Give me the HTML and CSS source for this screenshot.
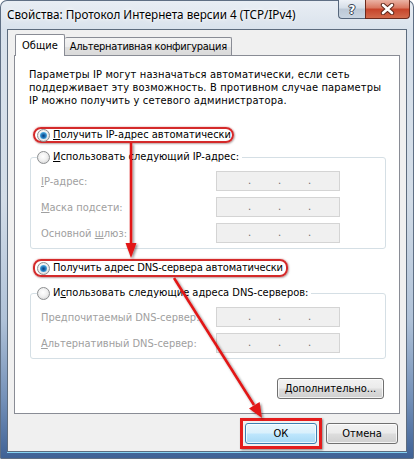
FILE: index.html
```html
<!DOCTYPE html>
<html lang="ru">
<head>
  <meta charset="UTF-8" />
  <title>Свойства: Протокол Интернета версии 4 (TCP/IPv4)</title>
  <link rel="stylesheet" href="styles.css">
</head>
<body>

  <div class="window">
    <div class="titlebar">
      <span class="title">Свойства: Протокол Интернета версии 4 (TCP/IPv4)</span>
      <div class="caption-btns">
        <span class="cap-btn help">?</span>
        <span class="cap-btn close">
          <svg width="15" height="12" viewBox="0 0 15 12">
            <path d="M3 2 L12 10 M12 2 L3 10" stroke="#5a2418" stroke-width="4.4" stroke-linecap="round"/>
            <path d="M3 2 L12 10 M12 2 L3 10" stroke="#fff" stroke-width="2.6" stroke-linecap="round"/>
          </svg>
        </span>
      </div>
    </div>

    <div class="client">
      <div class="tabs">
        <span class="tab active">Общие</span>
        <span class="tab">Альтернативная конфигурация</span>
      </div>

      <div class="panel">
        <p class="intro">Параметры IP могут назначаться автоматически, если сеть<br>поддерживает эту возможность. В противном случае параметры<br>IP можно получить у сетевого администратора.</p>

        <div class="option mark mark-ip">
          <span class="radio checked"></span>
          <span><u>П</u>олучить IP-адрес автоматически</span>
        </div>

        <fieldset class="group group-ip">
          <legend class="option">
            <span class="radio"></span>
            <span><u>И</u>спользовать следующий IP-адрес:</span>
          </legend>
          <div class="field">
            <span class="label"><u>I</u>P-адрес:</span>
            <span class="ip"><i>.</i><i>.</i><i>.</i></span>
          </div>
          <div class="field">
            <span class="label"><u>М</u>аска подсети:</span>
            <span class="ip"><i>.</i><i>.</i><i>.</i></span>
          </div>
          <div class="field">
            <span class="label">Основной <u>ш</u>люз:</span>
            <span class="ip"><i>.</i><i>.</i><i>.</i></span>
          </div>
        </fieldset>

        <div class="option mark mark-dns">
          <span class="radio checked"></span>
          <span>Получить адрес DNS-сервера автоматически</span>
        </div>

        <fieldset class="group group-dns">
          <legend class="option">
            <span class="radio"></span>
            <span>И<u>с</u>пользовать следующие адреса DNS-серверов:</span>
          </legend>
          <div class="field">
            <span class="label">Пре<u>д</u>почитаемый DNS-сервер:</span>
            <span class="ip"><i>.</i><i>.</i><i>.</i></span>
          </div>
          <div class="field">
            <span class="label"><u>А</u>льтернативный DNS-сервер:</span>
            <span class="ip"><i>.</i><i>.</i><i>.</i></span>
          </div>
        </fieldset>

        <div class="advanced">
          <span class="btn btn-advanced"><u>Д</u>ополнительно...</span>
        </div>
      </div>

      <div class="footer">
        <span class="ok-mark"><span class="btn default">ОК</span></span>
        <span class="btn">Отмена</span>
      </div>
    </div>

    <!-- red annotation arrows drawn over the dialog -->
    <svg class="arrows" width="414" height="459" viewBox="0 0 414 459">
      <defs>
        <filter id="shade" x="-20%" y="-20%" width="140%" height="140%">
          <feDropShadow dx="1.5" dy="1.5" stdDeviation="0.8" flood-color="#000" flood-opacity="0.45"/>
        </filter>
      </defs>
      <g filter="url(#shade)" fill="#e21414" stroke="#e21414">
        <line x1="131" y1="143" x2="131" y2="246" stroke-width="2.5"/>
        <polygon points="125.5,243 136.5,243 131,258" stroke="none"/>
        <line x1="174" y1="278" x2="254" y2="405" stroke-width="2.5"/>
        <polygon points="259.6,401.9 249,408.4 262,418" stroke="none"/>
      </g>
    </svg>
  </div>

</body>
</html>
```

FILE: styles.css
```css
* {
  box-sizing: border-box;
}

body {
  margin: 0;
  background: #fff;
  font-family: "DejaVu Sans Condensed", "DejaVu Sans", sans-serif;
  font-stretch: semi-condensed;
  font-size: 11px;
  color: #000;
}

.window {
  position: relative;
  width: 414px;
  height: 459px;
  display: flex;
  flex-direction: column;
  padding: 0 7px 7px;
  border-radius: 7px 7px 2px 2px;
  background: linear-gradient(180deg, #e9eef4 0px, #d9e2ec 30px, #d2dce7 200px, #b0c2d8 320px, #7390b8 400px, #3e6195 459px);
  box-shadow: inset 0 0 0 1px #5f6f84;
}

.titlebar {
  height: 29px;
  display: flex;
  align-items: flex-start;
  margin-right: -3px;
}

.title {
  margin-top: 6px;
  font-family: "Noto Sans", sans-serif;
  font-stretch: normal;
  font-size: 11.7px;
  line-height: 16px;
  text-shadow: 0 0 6px #fff, 0 0 3px #fff;
}

.caption-btns {
  margin-left: auto;
  display: flex;
}

.cap-btn {
  height: 19px;
  display: flex;
  align-items: center;
  justify-content: center;
  border: 1px solid #56667b;
  border-top: none;
}

.help {
  width: 27px;
  border-right: none;
  border-radius: 0 0 0 4px;
  background: linear-gradient(180deg, #eef2f7 0%, #d5dee8 45%, #bcc8d6 50%, #c9d4e1 100%);
  color: #fff;
  font-family: "DejaVu Sans", sans-serif;
  font-weight: bold;
  font-size: 13px;
  text-shadow: 0 0 1px #2e3b4c, 1px 0 0 #3a4758, -1px 0 0 #3a4758, 0 1px 0 #3a4758, 0 -1px 0 #3a4758;
}

.close {
  width: 45px;
  border-color: #6b2a1d;
  border-radius: 0 0 4px 0;
  background: linear-gradient(180deg, #eab3a5 0%, #d9765f 45%, #c6432a 50%, #d26a4c 100%);
}

.client {
  flex: 1;
  display: flex;
  flex-direction: column;
  background: #f0f0f0;
  border: 1px solid #5d6c7e;
  box-shadow: 0 1px 0 #86d3f3;
}

.tabs {
  position: relative;
  z-index: 1;
  display: flex;
  align-items: flex-end;
  height: 21px;
  margin: 4px 0 0 7px;
}

.tab {
  height: 18px;
  padding: 0 4px 0 5px;
  line-height: 17px;
  letter-spacing: -0.3px;
  border: 1px solid #898c95;
  border-left: none;
  border-bottom: none;
  border-radius: 2px 2px 0 0;
  background: linear-gradient(180deg, #f4f4f4 0%, #ececec 50%, #e0e0e0 51%, #dadada 100%);
}

.tab.active {
  height: 22px;
  margin-bottom: -1px;
  padding: 0 6px 0 6px;
  line-height: 22px;
  letter-spacing: 0;
  border-left: 1px solid #898c95;
  background: #fff;
}

.panel {
  height: 359px;
  margin: 0 6px;
  padding-top: 12px;
  background: #fff;
  border: 1px solid #898c95;
}

.intro {
  margin: 0 0 0 14px;
  line-height: 13px;
  letter-spacing: 0.15px;
}

.option {
  display: flex;
  align-items: center;
  gap: 3px;
  line-height: 16px;
}

.mark {
  width: fit-content;
  margin-left: 18px;
  padding: 0 2px;
  border: 2px solid #d42a2a;
  border-radius: 8px;
  box-shadow: 0 0 2px rgba(190, 0, 0, 0.45), 1px 1px 2px rgba(0, 0, 0, 0.25);
}

.mark-ip {
  height: 16px;
  margin-top: 20px;
  padding-right: 1px;
}

.mark-dns {
  height: 18px;
  margin-top: 10px;
  padding-right: 3px;
  letter-spacing: -0.15px;
}

.radio {
  position: relative;
  flex: none;
  width: 13px;
  height: 13px;
  border-radius: 50%;
  border: 1px solid #8c8e90;
  background: radial-gradient(circle at 45% 40%, #fff 0, #f1f1f1 45%, #cdcdcd 100%);
}

.radio.checked::after {
  content: "";
  position: absolute;
  left: 2px;
  top: 2px;
  width: 7px;
  height: 7px;
  border-radius: 50%;
  background: radial-gradient(circle at 50% 55%, #0b3d78 0, #1d6fb4 35%, #5ab7e8 75%, #9fdaf6 100%);
}

.group {
  margin: 6px 13px 0 15px;
  padding: 0 0 5px;
  min-width: 0;
  border: 1px solid #d5dfe5;
  border-radius: 3px;
}

.group legend {
  margin-left: 6px;
  padding: 0 3px 0 0;
}

.group-dns {
  margin-top: 8px;
}

.field {
  display: flex;
  align-items: center;
  height: 20px;
  margin-top: 6px;
  padding-left: 10px;
  color: #a0a0a0;
}

.field .label {
  flex: 1;
}

.ip {
  display: flex;
  width: 124px;
  height: 20px;
  margin-right: 45px;
  padding-left: 31px;
  background: #f0f0f0;
  border: 1px solid #d4d4d4;
  color: #6d6d6d;
  line-height: 17px;
}

.ip i {
  width: 30px;
  font-style: normal;
}

.advanced {
  display: flex;
  justify-content: flex-end;
  margin: 19px 15px 0 0;
}

.btn {
  display: inline-flex;
  align-items: center;
  justify-content: center;
  width: 72px;
  height: 21px;
  border: 1px solid #707070;
  border-radius: 3px;
  background: linear-gradient(180deg, #f2f2f2 0%, #ebebeb 48%, #dddddd 52%, #cfcfcf 100%);
  box-shadow: inset 0 0 0 1px rgba(255, 255, 255, 0.75);
}

.btn-advanced {
  width: 107px;
}

.btn.default {
  border-color: #3c7fb1;
  background: linear-gradient(180deg, #eaf6fd 0%, #d9f0fc 48%, #bee6fd 52%, #a7d9f5 100%);
}

.footer {
  display: flex;
  justify-content: flex-end;
  align-items: center;
  margin-top: 4px;
  padding-right: 8px;
}

.ok-mark {
  display: flex;
  margin-right: 4px;
  padding: 2px;
  border: 3px solid #e41c1c;
  box-shadow: 1px 1px 2px rgba(0, 0, 0, 0.45);
}

.arrows {
  position: absolute;
  top: 0;
  left: 0;
  pointer-events: none;
}
```
